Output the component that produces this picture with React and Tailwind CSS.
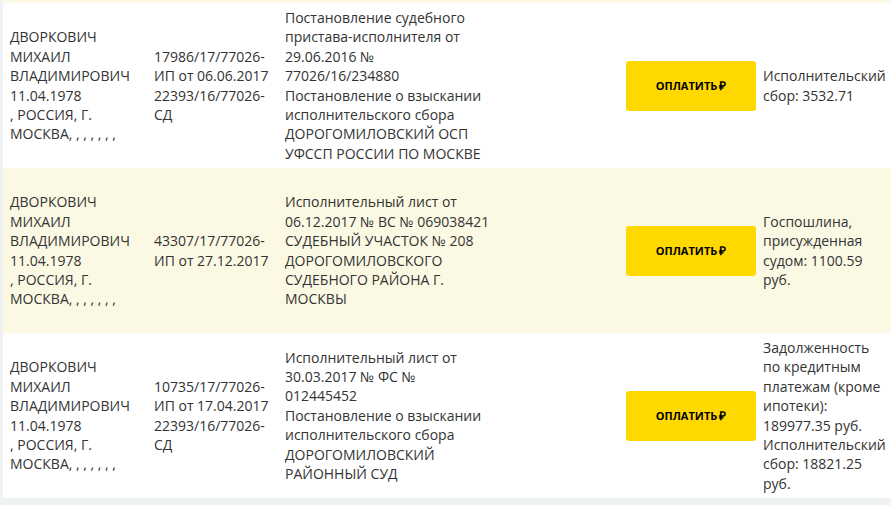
const rows = [
    {
        bg: 'bg-white',
        debtor: ['ДВОРКОВИЧ', 'МИХАИЛ', 'ВЛАДИМИРОВИЧ', '11.04.1978', ', РОССИЯ, Г.', 'МОСКВА, , , , , , ,'],
        proceeding: ['17986/17/77026-', 'ИП от 06.06.2017', '22393/16/77026-', 'СД'],
        document: [
            'Постановление судебного',
            'пристава-исполнителя от',
            '29.06.2016 №',
            '77026/16/234880',
            'Постановление о взыскании',
            'исполнительского сбора',
            'ДОРОГОМИЛОВСКИЙ ОСП',
            'УФССП РОССИИ ПО МОСКВЕ',
        ],
        subject: ['Исполнительский', 'сбор: 3532.71'],
    },
    {
        bg: 'bg-[#fbf9e4]',
        debtor: ['ДВОРКОВИЧ', 'МИХАИЛ', 'ВЛАДИМИРОВИЧ', '11.04.1978', ', РОССИЯ, Г.', 'МОСКВА, , , , , , ,'],
        proceeding: ['43307/17/77026-', 'ИП от 27.12.2017'],
        document: [
            'Исполнительный лист от',
            '06.12.2017 № ВС № 069038421',
            'СУДЕБНЫЙ УЧАСТОК № 208',
            'ДОРОГОМИЛОВСКОГО',
            'СУДЕБНОГО РАЙОНА Г.',
            'МОСКВЫ',
        ],
        subject: ['Госпошлина,', 'присужденная', 'судом: 1100.59', 'руб.'],
    },
    {
        bg: 'bg-white',
        debtor: ['ДВОРКОВИЧ', 'МИХАИЛ', 'ВЛАДИМИРОВИЧ', '11.04.1978', ', РОССИЯ, Г.', 'МОСКВА, , , , , , ,'],
        proceeding: ['10735/17/77026-', 'ИП от 17.04.2017', '22393/16/77026-', 'СД'],
        document: [
            'Исполнительный лист от',
            '30.03.2017 № ФС №',
            '012445452',
            'Постановление о взыскании',
            'исполнительского сбора',
            'ДОРОГОМИЛОВСКИЙ',
            'РАЙОННЫЙ СУД',
        ],
        subject: [
            'Задолженность',
            'по кредитным',
            'платежам (кроме',
            'ипотеки):',
            '189977.35 руб.',
            'Исполнительский',
            'сбор: 18821.25',
            'руб.',
        ],
    },
];

function Lines({ items }) {
    return (
        <div>
            {items.map((line, i) => (
                <div key={i} className="whitespace-nowrap">{line}</div>
            ))}
        </div>
    );
}

function PayButton() {
    return (
        <button className="flex h-[50px] w-[130px] items-center justify-center rounded-[3px] bg-[#ffd800] text-[11px] font-bold text-black">
            ОПЛАТИТЬ<span className="ml-[2px] text-[12px] font-extrabold">₽</span>
        </button>
    );
}

export default function App() {
    return (
        <div
            className="h-[505px] w-[891px] overflow-hidden bg-[#eef2f3] pl-[3px] text-[14px] leading-[19.4px] text-[#333333]"
            style={{ fontFamily: '"Open Sans", "Liberation Sans", sans-serif' }}
        >
            <div className="h-[3px] bg-[#fbf9e4]" />
            {rows.map((row, i) => (
                <div
                    key={i}
                    className={`flex h-[165px] items-center ${row.bg}`}
                >
                    <div className="w-[147px] shrink-0 pl-[7px]">
                        <Lines items={row.debtor} />
                    </div>
                    <div className="w-[132px] shrink-0 pl-[4px]">
                        <Lines items={row.proceeding} />
                    </div>
                    <div className="w-[341px] shrink-0 pl-[3px]">
                        <Lines items={row.document} />
                    </div>
                    <div className="flex w-[136px] shrink-0 justify-center">
                        <PayButton />
                    </div>
                    <div className="shrink-0 pl-[4px]">
                        <Lines items={row.subject} />
                    </div>
                </div>
            ))}
        </div>
    );
}
